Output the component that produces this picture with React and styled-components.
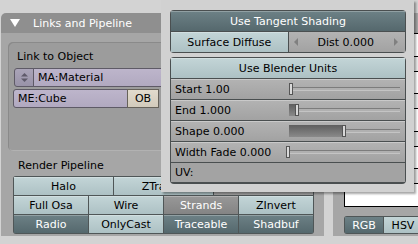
import styled, { createGlobalStyle, css } from "styled-components";

const GlobalStyle = createGlobalStyle`
  html, body {
    margin: 0;
    padding: 0;
    background: #d3d3d3;
  }
  * {
    box-sizing: border-box;
  }
`;

const pipelineRows = [
  [
    { label: "Halo", tone: "light" },
    { label: "ZTransp", tone: "light" },
    { label: "Zoffs: 0.000", tone: "num" },
  ],
  [
    { label: "Full Osa", tone: "light" },
    { label: "Wire", tone: "light" },
    { label: "Strands", tone: "gray" },
    { label: "ZInvert", tone: "light" },
  ],
  [
    { label: "Radio", tone: "dark" },
    { label: "OnlyCast", tone: "light" },
    { label: "Traceable", tone: "dark" },
    { label: "Shadbuf", tone: "dark" },
  ],
];

const sliders = [
  { label: "Start 1.00", value: 0, split: 118 },
  { label: "End 1.000", value: 5, split: 118 },
  { label: "Shape 0.000", value: 48, split: 118 },
  { label: "Width Fade 0.000", value: 0, split: 115 },
];

export default function App() {
  return (
    <>
      <GlobalStyle />
      <Screen>
        <LeftPanel>
          <PanelHeader>
            <Triangle />
            Links and Pipeline
          </PanelHeader>
          <PanelBody>
            <GroupBox>
              <BoxLabel>Link to Object</BoxLabel>
              <IdRow>
                <BrowseButton>
                  <svg width="7" height="9" viewBox="0 0 7 9">
                    <path d="M3.5 0 L7 3.5 H0 Z" fill="#5f5a6a" />
                    <path d="M3.5 9 L7 5.5 H0 Z" fill="#5f5a6a" />
                  </svg>
                </BrowseButton>
                <IdField $grow>MA:Material</IdField>
              </IdRow>
              <IdRow>
                <IdField $width={115}>ME:Cube</IdField>
                <ObButton>OB</ObButton>
              </IdRow>
            </GroupBox>
            <SectionLabel>Render Pipeline</SectionLabel>
            <ToggleGrid>
              {pipelineRows.map((row, r) =>
                row.map((b) => (
                  <ToggleButton
                    key={r + b.label}
                    $tone={b.tone}
                    $span={12 / row.length}
                  >
                    {b.label}
                  </ToggleButton>
                ))
              )}
            </ToggleGrid>
          </PanelBody>
        </LeftPanel>

        <RightPanel>
          <ColorBox>
            <ColorStrip />
            <ColorStrip />
            <ColorStrip />
            <ColorStrip />
          </ColorBox>
          <ModeRow>
            <ModeButton $tone="dark">RGB</ModeButton>
            <ModeButton $tone="light">HSV</ModeButton>
          </ModeRow>
        </RightPanel>

        <Popup>
          <ButtonBlock>
            <BlockButton $tone="dark" $span={2}>
              Use Tangent Shading
            </BlockButton>
            <BlockButton $tone="light">Surface Diffuse</BlockButton>
            <NumField>
              <Arrow $dir="left" />
              Dist 0.000
              <Arrow $dir="right" />
            </NumField>
          </ButtonBlock>

          <ButtonBlock>
            <BlockButton $tone="light" $span={2}>
              Use Blender Units
            </BlockButton>
            {sliders.map((s) => (
              <SliderRow key={s.label}>
                <SliderLabel $split={s.split}>{s.label}</SliderLabel>
                <Track>
                  {s.value > 0 && <Fill style={{ width: `${s.value}%` }} />}
                  <Handle style={{ left: `${s.value}%` }} />
                </Track>
              </SliderRow>
            ))}
            <UvRow>UV:</UvRow>
          </ButtonBlock>
        </Popup>
      </Screen>
    </>
  );
}

const tones = {
  light: css`
    background: linear-gradient(#c3d5d7, #adc1c4);
    color: #000;
  `,
  dark: css`
    background: linear-gradient(#6d8186, #55686d);
    color: #fff;
  `,
  gray: css`
    background: linear-gradient(#989898, #848484);
    color: #fff;
  `,
  num: css`
    background: linear-gradient(#b3b3b3, #a2a2a2);
    color: #000;
  `,
};

const Screen = styled.div`
  position: relative;
  width: 418px;
  height: 244px;
  overflow: hidden;
  display: flex;
  align-items: flex-start;
  gap: 9px;
  padding: 13px 0 0 1px;
  font-family: "DejaVu Sans", "Liberation Sans", sans-serif;
  font-size: 11px;
  color: #000;
`;

const LeftPanel = styled.div`
  width: 323px;
  flex-shrink: 0;
  display: flex;
  flex-direction: column;
`;

const PanelHeader = styled.div`
  height: 20px;
  display: flex;
  align-items: center;
  gap: 13px;
  padding-left: 9px;
  border-radius: 5px 5px 0 0;
  background: #8f8f8f;
  color: #fff;
`;

const Triangle = styled.span`
  width: 0;
  height: 0;
  border-left: 5px solid transparent;
  border-right: 5px solid transparent;
  border-top: 8px solid #fff;
`;

const PanelBody = styled.div`
  height: 203px;
  background: #a6a6a6;
  padding: 9px 7px 0 7px;
  display: flex;
  flex-direction: column;
`;

const GroupBox = styled.div`
  height: 109px;
  border-radius: 5px;
  background: #9c9c9c;
  box-shadow: inset 1px 1px 0 #8a8a8a, inset -1px -1px 0 #b2b2b2;
  padding: 4px 6px 0 6px;
  display: flex;
  flex-direction: column;
  gap: 2px;
`;

const BoxLabel = styled.div`
  height: 20px;
  padding-left: 3px;
  display: flex;
  align-items: center;
`;

const IdRow = styled.div`
  height: 19px;
  display: flex;
`;

const lavender = css`
  background: linear-gradient(#bdb5cb, #b1a9c0);
  border: 1px solid #5e5a66;
`;

const BrowseButton = styled.div`
  ${lavender};
  width: 20px;
  display: flex;
  align-items: center;
  justify-content: center;
  background: linear-gradient(#aaa4b8, #9993a8);
  border-radius: 3px 0 0 3px;
`;

const IdField = styled.div`
  ${lavender};
  ${(p) => (p.$grow ? "flex: 1;" : `width: ${p.$width}px;`)}
  margin-left: -1px;
  padding-left: 4px;
  display: flex;
  align-items: center;
  border-radius: ${(p) => (p.$grow ? "0 3px 3px 0" : "3px 0 0 3px")};
`;

const ObButton = styled.div`
  width: 32px;
  margin-left: -1px;
  border: 1px solid #66625a;
  background: linear-gradient(#e2dbcd, #d2cabb);
  display: flex;
  align-items: center;
  justify-content: center;
`;

const SectionLabel = styled.div`
  height: 25px;
  padding: 3px 0 0 10px;
  display: flex;
  align-items: center;
`;

const ToggleGrid = styled.div`
  margin-left: 5px;
  width: 301px;
  display: grid;
  grid-template-columns: repeat(12, 1fr);
  grid-auto-rows: 18px;
  gap: 1px;
  padding: 1px;
  background: #4f5657;
  border-radius: 3px;
`;

const ToggleButton = styled.div`
  grid-column: span ${(p) => p.$span};
  ${(p) => tones[p.$tone]};
  display: flex;
  align-items: center;
  justify-content: center;
  box-shadow: inset 0 1px 0 rgba(255, 255, 255, 0.25);
  white-space: nowrap;
  overflow: hidden;
`;

const RightPanel = styled.div`
  width: 90px;
  height: 223px;
  flex-shrink: 0;
  background: #a6a6a6;
  padding: 20px 0 0 11px;
  display: flex;
  flex-direction: column;
  gap: 9px;
`;

const ColorBox = styled.div`
  height: 174px;
  background: #fff;
  border: 1px solid #000;
  display: flex;
  flex-direction: column;
  justify-content: space-evenly;
  align-items: flex-end;
`;

const ColorStrip = styled.div`
  width: 12px;
  height: 16px;
  border: 1px solid #000;
  border-right: none;
  background: #ececec;
`;

const ModeRow = styled.div`
  display: flex;
  height: 18px;
  background: #4f5657;
  padding: 1px;
  gap: 1px;
  border-radius: 3px 0 0 3px;
`;

const ModeButton = styled.div`
  width: 39px;
  ${(p) => tones[p.$tone]};
  display: flex;
  align-items: center;
  justify-content: center;
`;

const Popup = styled.div`
  position: absolute;
  left: 161px;
  top: 0;
  width: 253px;
  height: 192px;
  background: #d1d1d1;
  box-shadow: 2px 2px 2px rgba(0, 0, 0, 0.35);
  padding: 10px 8px 0 9px;
  display: flex;
  flex-direction: column;
  gap: 4px;
`;

const ButtonBlock = styled.div`
  display: grid;
  grid-template-columns: 1fr 1fr;
  grid-auto-rows: 20px;
  gap: 1px;
  padding: 1px;
  background: #4a4f50;
  border-radius: 4px;
  overflow: hidden;
`;

const BlockButton = styled.div`
  grid-column: span ${(p) => p.$span || 1};
  ${(p) => tones[p.$tone]};
  display: flex;
  align-items: center;
  justify-content: center;
  box-shadow: inset 0 1px 0 rgba(255, 255, 255, 0.25);
`;

const NumField = styled.div`
  ${tones.num};
  display: flex;
  align-items: center;
  justify-content: space-between;
  padding: 0 7px 0 5px;
`;

const Arrow = styled.span`
  width: 0;
  height: 0;
  border-top: 4px solid transparent;
  border-bottom: 4px solid transparent;
  ${(p) =>
    p.$dir === "left"
      ? "border-right: 4px solid #808080;"
      : "border-left: 4px solid #808080;"}
`;

const SliderRow = styled.div`
  grid-column: span 2;
  ${tones.num};
  display: flex;
  align-items: center;
  padding-right: 5px;
  box-shadow: inset 0 1px 0 rgba(255, 255, 255, 0.3);
`;

const SliderLabel = styled.span`
  width: ${(p) => p.$split}px;
  padding-left: 4px;
  white-space: nowrap;
`;

const Track = styled.div`
  position: relative;
  flex: 1;
  height: 4px;
  border-top: 1px solid #7c7c7c;
  border-bottom: 1px solid #c4c4c4;
  background: #b0b0b0;
`;

const Fill = styled.div`
  position: absolute;
  left: 0;
  top: -5px;
  height: 12px;
  background: linear-gradient(#5e5e5e, #8a8a8a);
`;

const Handle = styled.div`
  position: absolute;
  top: -5px;
  width: 4px;
  height: 12px;
  background: #d9d9d9;
  border: 1px solid #555;
`;

const UvRow = styled.div`
  grid-column: span 2;
  height: 19px;
  background: #a3a3a3;
  padding-left: 4px;
  display: flex;
  align-items: center;
`;
